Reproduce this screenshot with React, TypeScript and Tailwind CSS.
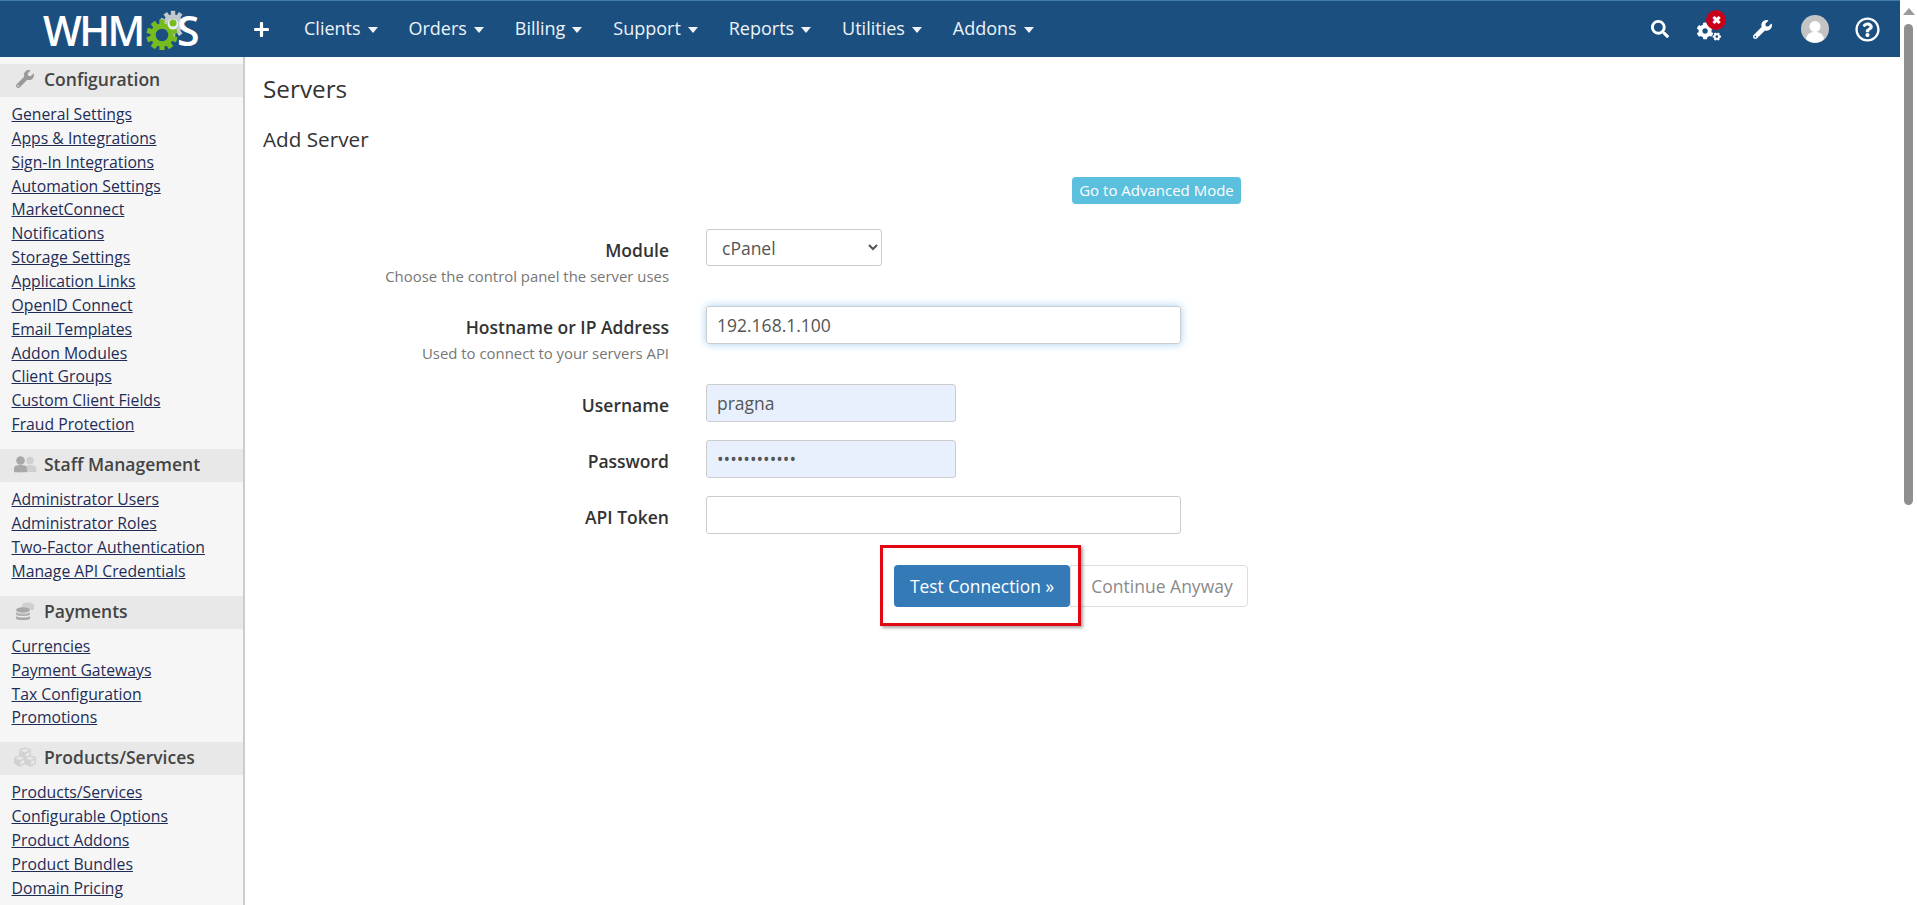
import React from 'react';
import { FaCogs, FaCubes, FaPlus, FaRegQuestionCircle, FaSearch, FaWrench } from 'react-icons/fa';

const SECTIONS = [
  {
    title: 'Configuration',
    icon: 'wrench',
    links: [
      'General Settings', 'Apps & Integrations', 'Sign-In Integrations', 'Automation Settings',
      'MarketConnect', 'Notifications', 'Storage Settings', 'Application Links', 'OpenID Connect',
      'Email Templates', 'Addon Modules', 'Client Groups', 'Custom Client Fields', 'Fraud Protection',
    ],
  },
  {
    title: 'Staff Management',
    icon: 'users',
    links: ['Administrator Users', 'Administrator Roles', 'Two-Factor Authentication', 'Manage API Credentials'],
  },
  {
    title: 'Payments',
    icon: 'coins',
    links: ['Currencies', 'Payment Gateways', 'Tax Configuration', 'Promotions'],
  },
  {
    title: 'Products/Services',
    icon: 'cubes',
    links: ['Products/Services', 'Configurable Options', 'Product Addons', 'Product Bundles', 'Domain Pricing'],
  },
];

const NAV = ['Clients', 'Orders', 'Billing', 'Support', 'Reports', 'Utilities', 'Addons'];

/* gear made of a ring and rotated teeth */
const Gear = ({ cx, cy, r, color, hole }: { cx: number; cy: number; r: number; color: string; hole: string }) => (
  <g>
    {Array.from({ length: 10 }).map((_, i) => (
      <rect
        key={i}
        x={cx - r * 0.2}
        y={cy - r * 1.2}
        width={r * 0.4}
        height={r * 0.5}
        fill={color}
        transform={`rotate(${i * 36} ${cx} ${cy})`}
      />
    ))}
    <circle cx={cx} cy={cy} r={r * 0.68} fill="none" stroke={color} strokeWidth={r * 0.42} />
    <circle cx={cx} cy={cy} r={r * 0.48} fill={hole} />
  </g>
);

const Logo = () => (
  <div className="relative h-[57px] w-[243px] shrink-0 font-['Open_Sans',sans-serif] text-[41px] font-semibold leading-[57px] text-white">
    <span className="absolute left-[43px] top-[1px] tracking-[-2.5px]">WHM</span>
    <svg className="absolute left-[146px] top-[9px]" width="40" height="40" viewBox="0 0 40 40">
      <Gear cx={27} cy={14} r={11} color="#c4c9ce" hole="#1b4f80" />
      <Gear cx={16} cy={25} r={13} color="#76bc21" hole="#1b4f80" />
      <circle cx={27} cy={14} r={5.500} fill="#e8ecef" />
      <circle cx={27} cy={13} r={3.500} fill="#76bc21" />
    </svg>
    <span className="absolute left-[177px] top-[1px]">S</span>
  </div>
);

const SectionIcon = ({ name }: { name: string }) => {
  if (name === 'wrench') return <FaWrench className="text-[18px] text-[#999]" />;
  if (name === 'cubes') return <FaCubes className="text-[22px] text-[#d2d2d2]" />;
  if (name === 'users')
    return (
      <svg width="24" height="17" viewBox="0 0 24 17">
        <circle cx="17" cy="4.500" r="3.800" fill="#d0d0d0" />
        <path d="M12 16v-3.500c0-2.500 2-3.500 5-3.500s6.500 1 6.500 3.500v3.500z" fill="#d0d0d0" />
        <circle cx="7.500" cy="4.500" r="4.300" fill="#a8a8a8" />
        <path d="M1 16v-3.500c0-2.500 2.500-3.500 6.500-3.500s6.500 1 6.500 3.500v3.500c0 .5-13 .5-13 0z" fill="#a8a8a8" />
      </svg>
    );
  return (
    <svg width="20" height="20" viewBox="0 0 20 20">
      <ellipse cx="13" cy="4" rx="6" ry="2.500" fill="#d0d0d0" />
      <rect x="7" y="4" width="12" height="5" fill="#d0d0d0" />
      <ellipse cx="8" cy="9" rx="7" ry="2.800" fill="#a8a8a8" />
      <path d="M1 11c1 2 13 2 14 0v2.500c-1 2-13 2-14 0z" fill="#b3b3b3" />
      <path d="M1 15c1 2 13 2 14 0v2.500c-1 2-13 2-14 0z" fill="#a8a8a8" />
    </svg>
  );
};

const Sidebar = () => (
  <aside className="w-[245px] shrink-0 border-r-2 border-[#ccc] bg-[#f6f6f6] pt-[7px]">
    {SECTIONS.map((s) => (
      <div key={s.title} className="mb-[12.2px]">
        <div className="flex h-[33px] items-center bg-[#e8e8e8] pb-[3px]">
          <span className="flex w-[44px] shrink-0 justify-center pl-[6px]">
            <SectionIcon name={s.icon} />
          </span>
          <span className="text-[17.5px] font-semibold text-[#444]">{s.title}</span>
        </div>
        <ul className="pl-[11.5px] pt-[6px]">
          {s.links.map((l) => (
            <li key={l} className="h-[23.87px] text-[15.75px] leading-[23.87px] whitespace-nowrap">
              <a href="#" className="text-[#1f2d56] underline">{l}</a>
            </li>
          ))}
        </ul>
      </div>
    ))}
  </aside>
);

const Label = ({ text, help }: { text: string; help?: string }) => (
  <div className="w-[406px] shrink-0 text-right">
    <div className="mt-[8px] text-[17.5px] font-semibold leading-[26px] text-[#333]">{text}</div>
    {help && <div className="mt-[0.5px] text-[14.9px] leading-[24px] text-[#777]">{help}</div>}
  </div>
);

const inputBase = 'block h-[38px] rounded-[3px] border border-[#ccc] px-[10px] text-[17.5px] text-[#555] outline-none';

const App = () => (
  <div className="flex h-[905px] w-[1917px] overflow-hidden bg-white font-['Open_Sans',sans-serif]">
    <div className="flex w-[1900px] shrink-0 flex-col">
      {/* Top bar */}
      <header className="flex h-[57px] shrink-0 items-center border-t border-[#3f7cb0] bg-[#1b4f80] text-white">
        <Logo />
        <FaPlus className="ml-[10px] text-[17px]" />
        <nav className="ml-[34px] flex items-center gap-[30.9px] pb-[2px]">
          {NAV.map((n) => (
            <span key={n} className="flex items-center gap-[7px] text-[18px] text-[#eef3f8]">
              {n}
              <span className="mt-[3px] h-0 w-0 border-x-[5px] border-t-[6px] border-x-transparent border-t-[#eef3f8]" />
            </span>
          ))}
        </nav>
        <div className="ml-auto flex items-center pr-[4.5px]">
          <span className="flex w-[48px] justify-center"><FaSearch className="text-[18px]" /></span>
          <span className="relative flex w-[51px] justify-center">
            <FaCogs className="mt-[3px] text-[24px]" />
            <span className="absolute left-[22.5px] top-[-6px] flex h-[20px] w-[20px] items-center justify-center rounded-full bg-[#c8001a] text-[11px] font-bold leading-none">✖</span>
          </span>
          <span className="flex w-[55px] justify-center"><FaWrench className="text-[19px]" /></span>
          <span className="flex w-[50px] justify-center">
            <svg width="28" height="28" viewBox="0 0 28 28">
              <circle cx="14" cy="14" r="14" fill="#c4c4c4" />
              <circle cx="14" cy="11.500" r="5.500" fill="#fff" />
              <path d="M5 24c1-6 5-7 9-7s8 1 9 7c-5 5-13 5-18 0z" fill="#fff" />
            </svg>
          </span>
          <span className="flex w-[56px] justify-center"><FaRegQuestionCircle className="text-[25px]" /></span>
        </div>
      </header>

      <div className="flex min-h-0 flex-1">
        <Sidebar />

        <main className="min-w-0 flex-1 pl-[18px]">
          <h1 className="mt-[15px] text-[24.3px] font-normal leading-[34px] text-[#333]">Servers</h1>
          <h2 className="mt-[16px] text-[20.7px] font-normal leading-[34px] text-[#333]">Add Server</h2>

          <div className="mt-[21px] flex w-[978px] justify-end">
            <button className="h-[27px] w-[169px] rounded-[4px] bg-[#5bc0de] text-[15px] leading-none text-white">
              Go to Advanced Mode
            </button>
          </div>

          <form className="mt-[25px]">
            <div className="flex h-[77px] gap-[37px]">
              <Label text="Module" help="Choose the control panel the server uses" />
              <select className="h-[37px] w-[176px] rounded-[3px] border border-[#ccc] bg-white pl-[11px] pr-[6px] text-[17.5px] text-[#555] outline-none">
                <option>cPanel</option>
              </select>
            </div>
            <div className="flex h-[78px] gap-[37px]">
              <Label text="Hostname or IP Address" help="Used to connect to your servers API" />
              <input
                className={`${inputBase} w-[475px] border-[#66afe9] shadow-[0_0_8px_rgba(102,175,233,0.6)]`}
                defaultValue="192.168.1.100"
              />
            </div>
            <div className="flex h-[56px] gap-[37px]">
              <Label text="Username" />
              <input className={`${inputBase} w-[250px] bg-[#e8f0fe] text-[#111]`} defaultValue="pragna" />
            </div>
            <div className="flex h-[56px] gap-[37px]">
              <Label text="Password" />
              <input type="password" className={`${inputBase} w-[250px] bg-[#e8f0fe] text-[#111]`} defaultValue="pragna123456" />
            </div>
            <div className="flex h-[69px] gap-[37px]">
              <Label text="API Token" />
              <input className={`${inputBase} w-[475px]`} />
            </div>
            <div className="ml-[631px] flex">
              <div className="relative">
                <button type="button" className="h-[42px] w-[176px] rounded-[4px] bg-[#337ab7] text-[17.4px] text-white">
                  Test Connection »
                </button>
                <div className="absolute bottom-[-19px] left-[-14px] right-[-11px] top-[-20px] border-[3px] border-[#e30613] shadow-[2px_2px_3px_rgba(0,0,0,0.35)]" />
              </div>
              <button type="button" className="h-[42px] w-[178px] rounded-r-[4px] border border-[#ddd] bg-white pl-[6px] text-[17.5px] text-[#8a8a8a]">
                Continue Anyway
              </button>
            </div>
          </form>
        </main>
      </div>
    </div>

    {/* Scrollbar */}
    <div className="flex w-[17px] shrink-0 flex-col items-center bg-white pt-[8px]">
      <div className="h-0 w-0 border-x-[6px] border-b-[7px] border-x-transparent border-b-[#9a9a9a]" />
      <div className="mt-[9px] h-[481px] w-[9px] rounded-full bg-[#8f8f8f]" />
    </div>
  </div>
);

export default App;
